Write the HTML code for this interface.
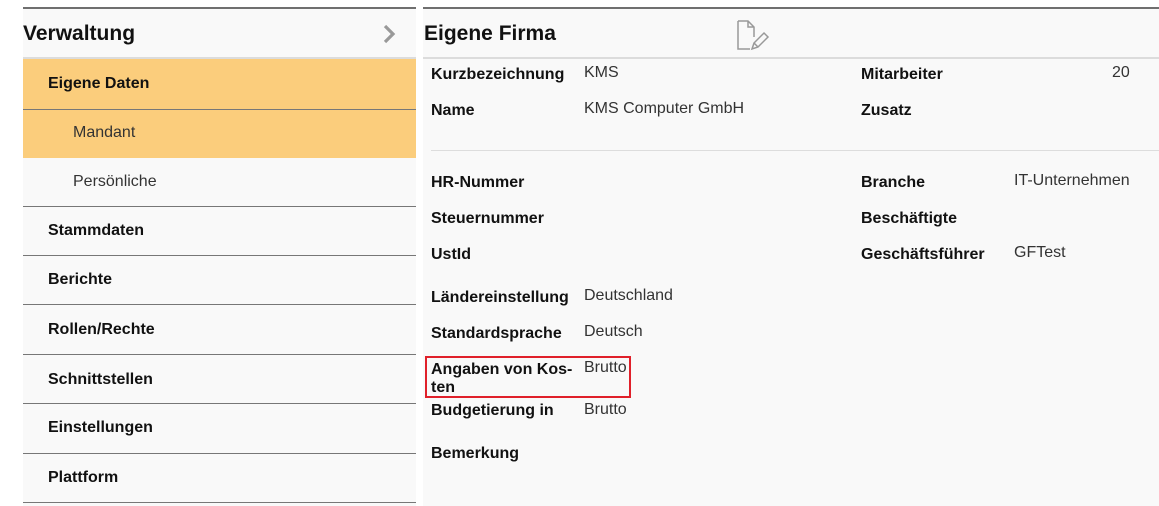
<!DOCTYPE html>
<html><head><meta charset="utf-8"><style>
*{margin:0;padding:0;box-sizing:border-box}
body{width:1159px;height:506px;background:#fff;font-family:"Liberation Sans",Arial,sans-serif;position:relative;overflow:hidden;color:#111}
.a{position:absolute;white-space:nowrap;line-height:18px}
.b{font-weight:bold;font-size:16px;color:#111}
.v{font-size:16px;color:#333}
.nav{position:absolute;left:23px;width:393px;border-bottom:1px solid #777}
</style></head><body>
<div style="position:absolute;left:23px;top:7px;width:393px;height:499px;background:#f9f9f9;border-top:2px solid #6f6f6f"></div>
<div style="position:absolute;left:423px;top:7px;width:736px;height:499px;background:#f9f9f9;border-top:2px solid #6f6f6f"></div>
<div style="position:absolute;left:23px;top:57px;width:393px;height:2px;background:#dcdcdc"></div>
<div style="position:absolute;left:423px;top:57px;width:736px;height:2px;background:#dcdcdc"></div>
<div class="a" style="left:23px;top:23px;font-size:21px;font-weight:bold;line-height:22px">Verwaltung</div>
<svg class="a" style="left:380px;top:23px" width="18" height="22"><path d="M5 3l8 8-8 8" fill="none" stroke="#999" stroke-width="3.2"/></svg>
<div class="a" style="left:424px;top:23px;font-size:21px;font-weight:bold;line-height:22px">Eigene Firma</div>
<svg class="a" style="left:736px;top:19px" width="34" height="34"><path d="M2 2h10l6 6v10M2 2v28h12M12 2v6h6" fill="none" stroke="#999" stroke-width="1.5"/><path d="M16 30l2-6 10-10 4 4-10 10z M18 24l4 4" fill="none" stroke="#999" stroke-width="1.5"/></svg>
<div class="nav" style="top:59px;height:51px;background:#fbcd7c"></div>
<div class="nav" style="top:110px;height:48px;background:#fbcd7c;border-bottom:none"></div>
<div class="nav" style="top:158px;height:49px"></div>
<div class="nav" style="top:207px;height:49px"></div>
<div class="nav" style="top:256px;height:49px"></div>
<div class="nav" style="top:305px;height:50px"></div>
<div class="nav" style="top:355px;height:49px"></div>
<div class="nav" style="top:404px;height:50px"></div>
<div class="nav" style="top:454px;height:49px"></div>
<div class="a b" style="left:48px;top:75px">Eigene Daten</div>
<div class="a v" style="left:73px;top:124px">Mandant</div>
<div class="a v" style="left:73px;top:173px">Persönliche</div>
<div class="a b" style="left:48px;top:222px">Stammdaten</div>
<div class="a b" style="left:48px;top:271px">Berichte</div>
<div class="a b" style="left:48px;top:321px">Rollen/Rechte</div>
<div class="a b" style="left:48px;top:371px">Schnittstellen</div>
<div class="a b" style="left:48px;top:419px">Einstellungen</div>
<div class="a b" style="left:48px;top:469px">Plattform</div>
<div style="position:absolute;left:431px;top:150px;width:728px;height:1px;background:#ddd"></div>
<div class="a b" style="left:431px;top:66px">Kurzbezeichnung</div><div class="a v" style="left:584px;top:64px">KMS</div>
<div class="a b" style="left:431px;top:102px">Name</div><div class="a v" style="left:584px;top:100px">KMS Computer GmbH</div>
<div class="a b" style="left:431px;top:174px">HR-Nummer</div>
<div class="a b" style="left:431px;top:210px">Steuernummer</div>
<div class="a b" style="left:431px;top:246px">UstId</div>
<div class="a b" style="left:431px;top:289px">Ländereinstellung</div><div class="a v" style="left:584px;top:287px">Deutschland</div>
<div class="a b" style="left:431px;top:325px">Standardsprache</div><div class="a v" style="left:584px;top:323px">Deutsch</div>
<div style="position:absolute;left:425px;top:356px;width:206px;height:42px;border:2px solid #e0202a"></div>
<div class="a b" style="left:431px;top:361px">Angaben von Kos-<br>ten</div><div class="a v" style="left:584px;top:359px">Brutto</div>
<div class="a b" style="left:431px;top:402px">Budgetierung in</div><div class="a v" style="left:584px;top:401px">Brutto</div>
<div class="a b" style="left:431px;top:445px">Bemerkung</div>
<div class="a b" style="left:861px;top:66px">Mitarbeiter</div><div class="a v" style="left:1112px;top:64px">20</div>
<div class="a b" style="left:861px;top:102px">Zusatz</div>
<div class="a b" style="left:861px;top:174px">Branche</div><div class="a v" style="left:1014px;top:172px">IT-Unternehmen</div>
<div class="a b" style="left:861px;top:210px">Beschäftigte</div>
<div class="a b" style="left:861px;top:246px">Geschäftsführer</div><div class="a v" style="left:1014px;top:244px">GFTest</div>
</body></html>
